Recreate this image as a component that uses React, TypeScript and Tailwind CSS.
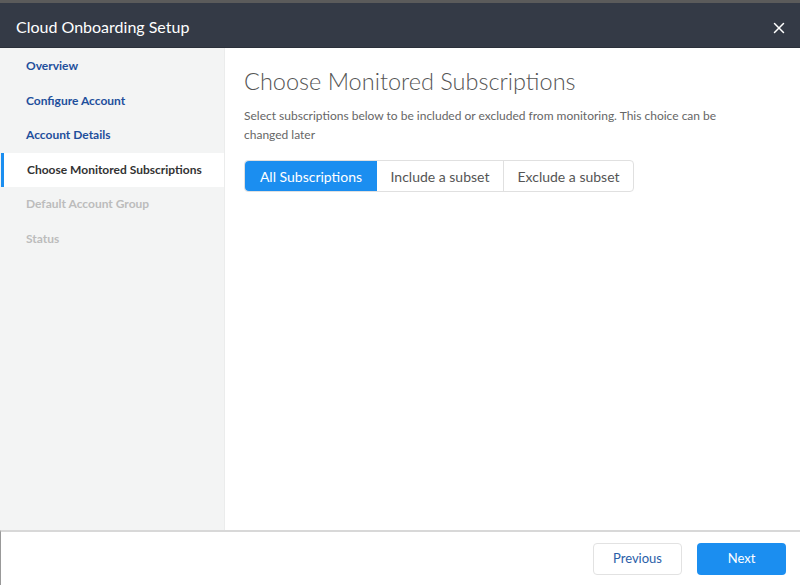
import { X } from "lucide-react";

const steps = [
  { label: "Overview", state: "done" },
  { label: "Configure Account", state: "done" },
  { label: "Account Details", state: "done" },
  { label: "Choose Monitored Subscriptions", state: "active" },
  { label: "Default Account Group", state: "todo" },
  { label: "Status", state: "todo" },
];

const App = () => {
  return (
    <div
      className="h-[585px] w-[800px] flex flex-col bg-white overflow-hidden"
      style={{ fontFamily: "Lato, 'Open Sans', sans-serif" }}
    >
      {/* top strip + header */}
      <div className="h-[3px] bg-[#5b5b5b]" />
      <header className="h-[45px] bg-[#343a46] flex items-center justify-between pl-4 pr-3 pt-[4px] border-b border-[#2b303a]">
        <h1 className="text-[16px] text-white">Cloud Onboarding Setup</h1>
        <X className="w-[18px] h-[18px] text-white mt-[2px]" strokeWidth={2} />
      </header>

      <div className="flex flex-1 min-h-0">
        {/* steps sidebar */}
        <nav className="w-[225px] bg-[#f3f4f4] border-r border-[#ebecec] pt-[1px]">
          {steps.map((s) => (
            <div
              key={s.label}
              className={
                s.state === "active"
                  ? "h-[34.5px] flex items-center pl-[23px] bg-white border-l-[3px] border-[#1b8ef0] ml-[1px] text-[12px] font-bold text-[#333]"
                  : s.state === "done"
                  ? "h-[34.5px] flex items-center pl-[26px] text-[12px] font-bold text-[#1e4f9c]"
                  : "h-[34.5px] flex items-center pl-[26px] text-[12px] font-bold text-[#bcbcbc]"
              }
            >
              {s.label}
            </div>
          ))}
        </nav>

        {/* main */}
        <main className="flex-1 pl-[19px] pr-[62px] pt-[17px]">
          <h2 className="text-[23.5px] font-light text-[#555] leading-[32px]">
            Choose Monitored Subscriptions
          </h2>
          <p className="mt-[9px] text-[12px] leading-[19px] text-[#666]">
            Select subscriptions below to be included or excluded from monitoring. This choice can be changed later
          </p>
          <div className="mt-[16px] inline-flex h-[32px] rounded border border-[#e0e0e0] text-[14px]">
            <button className="w-[132px] bg-[#1b8ef0] text-white rounded-l">All Subscriptions</button>
            <button className="w-[127px] border-r border-[#e0e0e0] text-[#555]">Include a subset</button>
            <button className="w-[129px] text-[#555]">Exclude a subset</button>
          </div>
        </main>
      </div>

      {/* footer */}
      <footer className="h-[55px] border-t-2 border-[#d8d8d8] border-l border-l-[#999] flex items-center justify-end gap-[15px] pr-[14px]">
        <button className="w-[89px] h-[32px] rounded border border-[#e2e2e2] bg-white text-[13px] text-[#2a5ea8]">
          Previous
        </button>
        <button className="w-[89px] h-[32px] rounded bg-[#1b8ef0] text-[13px] text-white">
          Next
        </button>
      </footer>
    </div>
  );
};

export default App;
